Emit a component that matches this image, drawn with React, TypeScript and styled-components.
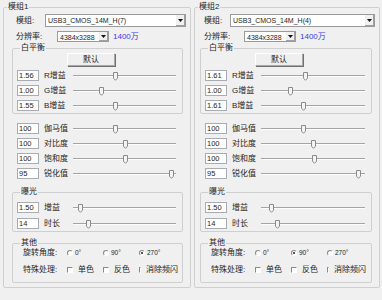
import React from "react";
import styled, { createGlobalStyle } from "styled-components";

const GlobalStyle = createGlobalStyle`
  html, body {
    margin: 0;
    padding: 0;
    background: #f0f0f0;
  }
  body {
    font-family: "Liberation Sans", "Noto Sans CJK SC", sans-serif;
    font-size: 8px;
    line-height: 10px;
    color: #252525;
  }
`;

const Page = styled.div`
  display: flex;
  align-items: flex-start;
  gap: 3px;
  width: 382px;
  height: 300px;
  box-sizing: border-box;
  padding: 2px 0 0 3px;
  overflow: hidden;
`;

const Panel = styled.fieldset<{ $width: number }>`
  box-sizing: border-box;
  width: ${(p) => p.$width}px;
  min-width: 0;
  margin: 0;
  padding: 0 0 4px;
  border: 1px solid #cfcfcf;
  border-radius: 2px;
`;

const Legend = styled.legend`
  margin-left: 3px;
  padding: 0 1px;
  font-size: 8px;
  line-height: 10px;
`;

const PanelBody = styled.div<{ $padLeft: number }>`
  display: flex;
  flex-direction: column;
  padding: 0 7px 0 ${(p) => p.$padLeft}px;
`;

const SubGroup = styled.fieldset<{ $top: number; $bottom: number }>`
  min-width: 0;
  margin: ${(p) => p.$top}px 0 0;
  padding: 0 4px ${(p) => p.$bottom}px;
  border: 1px solid #cfcfcf;
  border-radius: 2px;
`;

const FieldRow = styled.div<{ $top: number; $h: number }>`
  display: flex;
  align-items: center;
  height: ${(p) => p.$h}px;
  margin-top: ${(p) => p.$top}px;
  padding-left: 4px;
`;

const FieldLabel = styled.span<{ $w: number }>`
  width: ${(p) => p.$w}px;
  flex-shrink: 0;
  white-space: nowrap;
`;

const Combo = styled.div<{ $w?: number }>`
  display: flex;
  align-items: stretch;
  box-sizing: border-box;
  height: 100%;
  ${(p) => (p.$w ? `width: ${p.$w}px;` : "flex: 1; margin-right: -3px;")}
  background: #fff;
  border: 1px solid #9a9a9a;
`;

const ComboText = styled.span`
  flex: 1;
  padding-left: 2px;
  overflow: hidden;
  white-space: nowrap;
  font-size: 7px;
  line-height: 11px;
`;

const ComboArrow = styled.span`
  display: flex;
  align-items: center;
  justify-content: center;
  width: 9px;
  background: #f0f0f0;
  border-left: 1px solid #fff;
  box-shadow: inset -1px -1px 0 #a0a0a0;
`;

const MegaPixel = styled.span`
  margin-left: 4px;
  color: #3a3aee;
`;

const DefaultButton = styled.div`
  box-sizing: border-box;
  width: 48px;
  height: 13px;
  margin-left: 50px;
  display: flex;
  align-items: center;
  justify-content: center;
  background: #efefef;
  border: 1px solid #fff;
  border-right-color: #a8a8a8;
  border-bottom-color: #a8a8a8;
  box-shadow: 1px 1px 0 #707070;
`;

const ParamList = styled.div<{ $top: number; $gap: number; $pad: number }>`
  display: flex;
  flex-direction: column;
  gap: ${(p) => p.$gap}px;
  margin-top: ${(p) => p.$top}px;
  padding: 0 ${(p) => p.$pad}px;
`;

const ParamRow = styled.div`
  display: flex;
  align-items: center;
  height: 11px;
`;

const ValueBox = styled.span`
  box-sizing: border-box;
  width: 22px;
  height: 11px;
  margin-right: 5px;
  padding-left: 1px;
  font-size: 7.5px;
  line-height: 9px;
  background: #fff;
  border: 1px solid #a9acb2;
`;

const ParamLabel = styled.span`
  width: 27px;
  white-space: nowrap;
`;

const Track = styled.div`
  position: relative;
  flex: 1;
  height: 11px;
  display: flex;
  align-items: center;
`;

const TrackLine = styled.div`
  flex: 1;
  height: 1px;
  margin: 0 2px;
  background: #a4a4a4;
  border-bottom: 1px solid #fdfdfd;
`;

const Thumb = styled.svg`
  position: absolute;
  top: 2px;
  width: 5px;
  height: 9px;
`;

const OptionRow = styled.div<{ $top: number }>`
  display: flex;
  align-items: center;
  height: 10px;
  margin-top: ${(p) => p.$top}px;
  padding-left: 6px;
`;

const OptionLabel = styled.span`
  width: 44px;
  white-space: nowrap;
`;

const Option = styled.span`
  display: flex;
  align-items: center;
  width: 36px;
  white-space: nowrap;
`;

const Radio = styled.span<{ $on: boolean }>`
  position: relative;
  box-sizing: border-box;
  width: 6px;
  height: 6px;
  margin-right: 2px;
  border-radius: 50%;
  background: #fff;
  border: 1px solid #fff;
  border-top-color: #8a8a8a;
  border-left-color: #8a8a8a;
  &::after {
    content: "";
    display: ${(p) => (p.$on ? "block" : "none")};
    position: absolute;
    left: 1px;
    top: 1px;
    width: 2px;
    height: 2px;
    border-radius: 50%;
    background: #222;
  }
`;

const Check = styled.span`
  box-sizing: border-box;
  width: 6px;
  height: 6px;
  margin-right: 5px;
  background: #fff;
  border: 1px solid #fff;
  border-top-color: #8a8a8a;
  border-left-color: #8a8a8a;
`;

const SmallText = styled.span`
  font-size: 6.5px;
`;

type Param = { value: string; label: string; pos: number };

type PanelData = {
  title: string;
  model: string;
  width: number;
  padLeft: number;
  modelLabelW: number;
  resLabelW: number;
  wb: Param[];
  image: Param[];
  exposure: Param[];
  rotate: number;
};

const panels: PanelData[] = [
  {
    title: "模组1",
    model: "USB3_CMOS_14M_H(7)",
    width: 188,
    padLeft: 8,
    modelLabelW: 29,
    resLabelW: 41,
    wb: [
      { value: "1.56", label: "R增益", pos: 0.41 },
      { value: "1.00", label: "G增益", pos: 0.28 },
      { value: "1.55", label: "B增益", pos: 0.41 },
    ],
    image: [
      { value: "100", label: "伽马值", pos: 0.41 },
      { value: "100", label: "对比度", pos: 0.51 },
      { value: "100", label: "饱和度", pos: 0.51 },
      { value: "95", label: "锐化值", pos: 0.96 },
    ],
    exposure: [
      { value: "1.50", label: "增益", pos: 0.07 },
      { value: "14", label: "时长", pos: 0.15 },
    ],
    rotate: 2,
  },
  {
    title: "模组2",
    model: "USB3_CMOS_14M_H(4)",
    width: 186,
    padLeft: 5,
    modelLabelW: 26,
    resLabelW: 40,
    wb: [
      { value: "1.61", label: "R增益", pos: 0.43 },
      { value: "1.00", label: "G增益", pos: 0.28 },
      { value: "1.61", label: "B增益", pos: 0.41 },
    ],
    image: [
      { value: "100", label: "伽马值", pos: 0.41 },
      { value: "100", label: "对比度", pos: 0.5 },
      { value: "100", label: "饱和度", pos: 0.51 },
      { value: "95", label: "锐化值", pos: 0.94 },
    ],
    exposure: [
      { value: "1.50", label: "增益", pos: 0.1 },
      { value: "14", label: "时长", pos: 0.16 },
    ],
    rotate: 1,
  },
];

function Arrow() {
  return (
    <svg width="5" height="3" viewBox="0 0 5 3">
      <path d="M0 0H5L2.5 3Z" fill="#111" />
    </svg>
  );
}

function Slider({ param }: { param: Param }) {
  return (
    <ParamRow>
      <ValueBox>{param.value}</ValueBox>
      <ParamLabel>{param.label}</ParamLabel>
      <Track>
        <TrackLine />
        <Thumb
          viewBox="0 0 5 9"
          style={{ left: `calc(${param.pos} * (100% - 4px) - 0.5px)` }}
        >
          <path
            d="M0.5 0.5H4.5V6.2L2.5 8.3L0.5 6.2Z"
            fill="#f4f4f4"
            stroke="#8a8a8a"
          />
        </Thumb>
      </Track>
    </ParamRow>
  );
}

function CameraPanel({ data }: { data: PanelData }) {
  return (
    <Panel $width={data.width}>
      <Legend>{data.title}</Legend>
      <PanelBody $padLeft={data.padLeft}>
        <FieldRow $top={2} $h={13}>
          <FieldLabel $w={data.modelLabelW}>模组:</FieldLabel>
          <Combo>
            <ComboText>{data.model}</ComboText>
            <ComboArrow>
              <Arrow />
            </ComboArrow>
          </Combo>
        </FieldRow>
        <FieldRow $top={4} $h={11}>
          <FieldLabel $w={data.resLabelW}>分辨率:</FieldLabel>
          <Combo $w={52}>
            <ComboText>4384x3288</ComboText>
            <ComboArrow>
              <Arrow />
            </ComboArrow>
          </Combo>
          <MegaPixel>1400万</MegaPixel>
        </FieldRow>

        <SubGroup $top={1} $bottom={2}>
          <Legend>白平衡</Legend>
          <DefaultButton>默认</DefaultButton>
          <ParamList $top={4} $gap={4} $pad={0}>
            {data.wb.map((p) => (
              <Slider key={p.label} param={p} />
            ))}
          </ParamList>
        </SubGroup>

        <ParamList $top={9} $gap={4} $pad={5}>
          {data.image.map((p) => (
            <Slider key={p.label} param={p} />
          ))}
        </ParamList>

        <SubGroup $top={8} $bottom={2}>
          <Legend>曝光</Legend>
          <ParamList $top={5} $gap={5} $pad={0}>
            {data.exposure.map((p) => (
              <Slider key={p.label} param={p} />
            ))}
          </ParamList>
        </SubGroup>

        <SubGroup $top={6} $bottom={7}>
          <Legend>其他</Legend>
          <OptionRow $top={0}>
            <OptionLabel>旋转角度:</OptionLabel>
            {["0°", "90°", "270°"].map((a, i) => (
              <Option key={a}>
                <Radio $on={i === data.rotate} />
                <SmallText>{a}</SmallText>
              </Option>
            ))}
          </OptionRow>
          <OptionRow $top={7}>
            <OptionLabel>特殊处理:</OptionLabel>
            {["单色", "反色", "消除频闪"].map((a) => (
              <Option key={a}>
                <Check />
                {a}
              </Option>
            ))}
          </OptionRow>
        </SubGroup>
      </PanelBody>
    </Panel>
  );
}

export default function App() {
  return (
    <>
      <GlobalStyle />
      <Page>
        {panels.map((p) => (
          <CameraPanel key={p.title} data={p} />
        ))}
      </Page>
    </>
  );
}
